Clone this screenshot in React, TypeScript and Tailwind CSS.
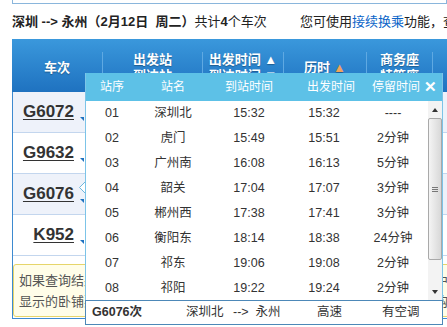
import { memo } from 'react';

const stops = [
  ['01', '深圳北', '15:32', '15:32', '----'],
  ['02', '虎门', '15:49', '15:51', '2分钟'],
  ['03', '广州南', '16:08', '16:13', '5分钟'],
  ['04', '韶关', '17:04', '17:07', '3分钟'],
  ['05', '郴州西', '17:38', '17:41', '3分钟'],
  ['06', '衡阳东', '18:14', '18:38', '24分钟'],
  ['07', '祁东', '19:06', '19:08', '2分钟'],
  ['08', '祁阳', '19:22', '19:24', '2分钟'],
];

const trains = [
  { no: 'G6072', bg: 'bg-[#eef2fa]' },
  { no: 'G9632', bg: 'bg-white' },
  { no: 'G6076', bg: 'bg-[#eef2fa]' },
  { no: 'K952', bg: 'bg-white' },
];

const font = { fontFamily: '"Liberation Sans", "Noto Sans CJK SC", sans-serif' };

const HeadSep = () => <div className="mt-[13px] h-[34px] w-px shrink-0 self-start bg-[#5fa9e2]" />;

const StopsPopup = () => (
  <div className="absolute left-[85px] top-[73px] flex w-[358px] flex-col border-x border-[#7cc4e8] bg-white text-[#333]">
    <div className="flex h-[28px] items-center bg-[#5dc1e7] text-[12px] text-white">
      <span className="w-[52px] text-center">站序</span>
      <span className="w-[70px] text-center">站名</span>
      <span className="w-[82px] text-center">到站时间</span>
      <span className="w-[82px] text-center">出发时间</span>
      <span className="w-[46px] whitespace-nowrap text-center">停留时间</span>
      <span className="flex-1 text-center text-[15px] font-bold">✕</span>
    </div>
    <div className="flex h-[199px]">
      <div className="w-[342px]">
        {stops.map((s) => (
          <div key={s[0]} className="flex h-[25px] items-center text-[12.5px]">
            <span className="w-[52px] text-center">{s[0]}</span>
            <span className="w-[70px] text-center">{s[1]}</span>
            <span className="w-[82px] text-center">{s[2]}</span>
            <span className="w-[68px] text-center">{s[3]}</span>
            <span className="w-[70px] text-center">{s[4]}</span>
          </div>
        ))}
      </div>
      {/* scrollbar */}
      <div className="flex w-[14px] flex-col bg-[#f3f3f3]">
        <div className="flex h-[17px] items-center justify-center">
          <div className="h-0 w-0 border-x-[3px] border-b-[4px] border-x-transparent border-b-[#333]" />
        </div>
        <div className="flex h-[142px] flex-col items-center justify-center gap-[1px] rounded-[2px] border border-[#a9a9a9] bg-gradient-to-r from-[#f4f4f4] to-[#d8d8d8]">
          <div className="h-px w-[6px] bg-[#777]" />
          <div className="h-px w-[6px] bg-[#777]" />
          <div className="h-px w-[6px] bg-[#777]" />
        </div>
        <div className="flex-1" />
        <div className="flex h-[16px] items-center justify-center">
          <div className="h-0 w-0 border-x-[3px] border-t-[4px] border-x-transparent border-t-[#333]" />
        </div>
      </div>
    </div>
    <div className="-mx-px flex h-[25px] items-center border border-[#4d88b8] bg-white text-[12.5px]">
      <span className="w-[100px] pl-[6px] font-bold">G6076次</span>
      <span className="w-[47px]">深圳北</span>
      <span className="w-[84px] whitespace-pre">{'-->  永州'}</span>
      <span className="w-[65px]">高速</span>
      <span>有空调</span>
    </div>
  </div>
);

const App = () => {
  return (
    <div className="relative h-[327px] w-[447px] overflow-hidden bg-white text-[#222]" style={font}>
      <div className="ml-[12px] h-[4px] w-[435px] border-x border-b border-[#8ab6dc]" />

      <div className="flex h-[35px] items-center whitespace-nowrap pl-[12px] text-[13px]">
        <span className="w-[288px] shrink-0">
          <span className="font-bold">深圳 --&gt; 永州（2月12日&nbsp; 周二）</span>共计<span className="font-bold">4</span>个车次
        </span>
        <span>
          您可使用<span className="text-[#0a64c8]">接续换乘</span>功能，查询途中换乘一次的部分列车余票情况。
        </span>
      </div>

      <div className="ml-[12px] w-[440px]">
        <div className="flex h-[53px] bg-gradient-to-b from-[#3a98dc] to-[#1f72c0] text-[13px] font-bold leading-[16px] text-white [text-shadow:0_1px_1px_rgba(0,0,0,0.3)]">
          <div className="flex w-[90px] shrink-0 justify-center pt-[21px]">车次</div>
          <HeadSep />
          <div className="flex w-[99px] shrink-0 flex-col items-center pt-[13px]">
            <span>出发站</span>
            <span>到达站</span>
          </div>
          <HeadSep />
          <div className="flex w-[80px] shrink-0 flex-col items-center pt-[13px]">
            <span>出发时间 ▲</span>
            <span>到达时间 ▼</span>
          </div>
          <HeadSep />
          <div className="flex w-[82px] shrink-0 justify-center pt-[21px]">
            历时 <span className="ml-[3px] text-[#f0a35a]">▲</span>
          </div>
          <HeadSep />
          <div className="flex w-[65px] shrink-0 flex-col items-center pt-[13px]">
            <span>商务座</span>
            <span>特等座</span>
          </div>
          <HeadSep />
        </div>

        <div className="border-b border-l border-[#3d8ad0]">
          {trains.map((t) => (
            <div key={t.no} className={`flex h-[41px] border-b border-[#c3d6ee] ${t.bg}`}>
              <div className="relative flex w-[73px] items-center justify-end pr-[12px]">
                <span className="text-[17px] font-bold text-[#333] underline underline-offset-2">{t.no}</span>
                <div className="absolute bottom-[11px] right-[2px] h-0 w-0 border-l-[4px] border-t-[4px] border-l-transparent border-t-[#1f72c0]" />
              </div>
            </div>
          ))}
          <div className="pb-[1px] pt-[8px]">
            <div className="whitespace-nowrap rounded-[3px] border border-[#e6d56a] bg-[#fffde8] px-[5px] pb-[4px] pt-[5px] text-[13px] leading-[21px] text-[#555]">
              <div>如果查询结果中没有满足需求的车次，您还可以使用接续换乘功能查询途中换乘一次的列车。</div>
              <div>显示的卧铺票价均为上铺票价，供您参考，具体票价以您确认支付时实际购买的铺别票价为准。</div>
            </div>
          </div>
        </div>
      </div>

      <svg className="absolute left-[79px] top-[181px]" width="8" height="13" viewBox="0 0 8 13">
        <polygon points="7,0 0.5,6.5 7,13" fill="#fff" stroke="#6fb6dc" strokeWidth="1" />
        <rect x="7" y="0" width="1" height="13" fill="#fff" />
      </svg>

      <StopsPopup />
    </div>
  );
};

export default memo(App);
